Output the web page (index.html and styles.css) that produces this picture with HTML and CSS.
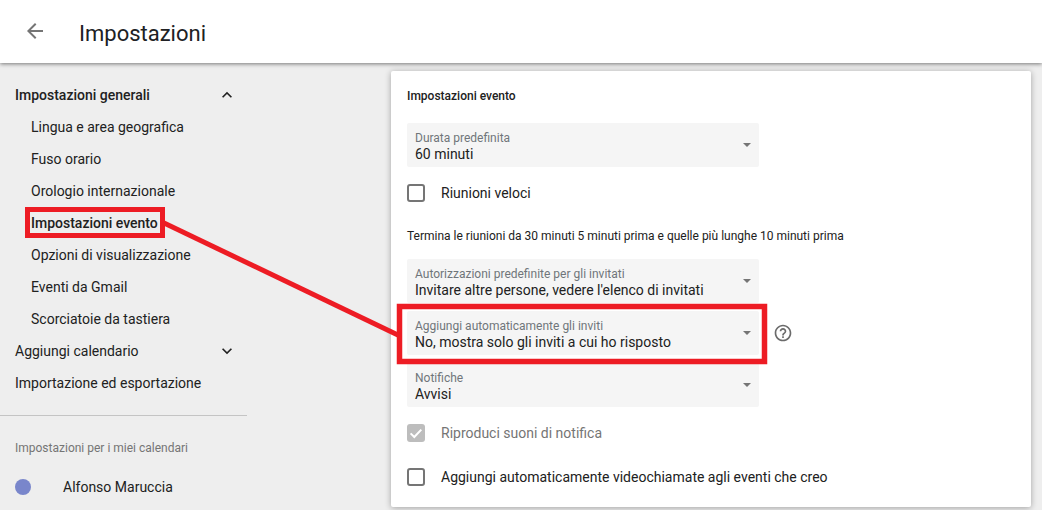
FILE: index.html
```html
<!DOCTYPE html>
<html lang="it">
<head>
<meta charset="utf-8">
<title>Impostazioni</title>
<link rel="stylesheet" href="styles.css">
</head>
<body>
<header class="topbar">
  <svg class="back" width="24" height="24" viewBox="0 0 24 24"><path d="M20 11H7.83l5.59-5.59L12 4l-8 8 8 8 1.41-1.41L7.83 13H20v-2z"/></svg>
  <h1 class="title">Impostazioni</h1>
</header>
<div class="main">
  <nav class="side">
    <div class="nav-row strong">Impostazioni generali
      <svg class="chev" width="20" height="20" viewBox="0 0 24 24"><path d="M12 8l-6 6 1.41 1.41L12 10.83l4.59 4.58L18 14z"/></svg>
    </div>
    <div class="nav-row sub">Lingua e area geografica</div>
    <div class="nav-row sub">Fuso orario</div>
    <div class="nav-row sub">Orologio internazionale</div>
    <div class="nav-row sub active">Impostazioni evento</div>
    <div class="nav-row sub">Opzioni di visualizzazione</div>
    <div class="nav-row sub">Eventi da Gmail</div>
    <div class="nav-row sub">Scorciatoie da tastiera</div>
    <div class="nav-row">Aggiungi calendario
      <svg class="chev" width="20" height="20" viewBox="0 0 24 24"><path d="M16.59 8.59L12 13.17 7.41 8.59 6 10l6 6 6-6z"/></svg>
    </div>
    <div class="nav-row">Importazione ed esportazione</div>
    <hr class="divider">
    <div class="side-label">Impostazioni per i miei calendari</div>
    <div class="cal"><span class="dot"></span>Alfonso Maruccia</div>
  </nav>
  <section class="card">
    <h2 class="card-title">Impostazioni evento</h2>
    <div class="select first"><span class="lab">Durata predefinita</span><span class="val">60 minuti</span><i class="caret"></i></div>
    <label class="check"><span class="box"></span>Riunioni veloci</label>
    <p class="note">Termina le riunioni da 30 minuti 5 minuti prima e quelle più lunghe 10 minuti prima</p>
    <div class="select"><span class="lab">Autorizzazioni predefinite per gli invitati</span><span class="val">Invitare altre persone, vedere l'elenco di invitati</span><i class="caret"></i></div>
    <div class="select-row">
      <div class="select"><span class="lab">Aggiungi automaticamente gli inviti</span><span class="val">No, mostra solo gli inviti a cui ho risposto</span><i class="caret"></i></div>
      <svg class="help" width="20" height="20" viewBox="0 0 24 24"><path d="M11 18h2v-2h-2v2zm1-16C6.48 2 2 6.48 2 12s4.480 10 10 10 10-4.480 10-10S17.520 2 12 2zm0 18c-4.410 0-8-3.590-8-8s3.590-8 8-8 8 3.590 8 8-3.590 8-8 8zm0-14c-2.210 0-4 1.790-4 4h2c0-1.100.9-2 2-2s2 .9 2 2c0 2-3 1.750-3 5h2c0-2.250 3-2.500 3-5 0-2.210-1.790-4-4-4z"/></svg>
    </div>
    <div class="select"><span class="lab">Notifiche</span><span class="val">Avvisi</span><i class="caret"></i></div>
    <label class="check disabled"><span class="box on"><svg width="18" height="18" viewBox="0 0 18 18"><path d="M3.600 9.400l3.700 3.600 7-7.400" fill="none" stroke="#fff" stroke-width="2"/></svg></span>Riproduci suoni di notifica</label>
    <label class="check last"><span class="box"></span>Aggiungi automaticamente videochiamate agli eventi che creo</label>
  </section>
</div>
<svg class="annot" width="1042" height="510" viewBox="0 0 1042 510">
  <g fill="none" stroke="#ed1c24">
    <rect x="27.500" y="209.500" width="135" height="26" stroke-width="5"/>
    <rect x="399.500" y="306.500" width="365" height="55" stroke-width="5.500"/>
    <path d="M163 222.500L400 336" stroke-width="5"/>
  </g>
</svg>
</body>
</html>
```
FILE: styles.css
```css
* { box-sizing: border-box; }
html, body { margin: 0; height: 510px; overflow: hidden; }
body {
  position: relative;
  background: #eeeeee;
  font-family: Roboto, "Liberation Sans", sans-serif;
  font-size: 14px;
  color: #212121;
}
.topbar {
  position: relative;
  z-index: 2;
  height: 63px;
  background: #fff;
  box-shadow: 0 1px 4px rgba(0, 0, 0, .5);
  display: flex;
  align-items: center;
  padding-left: 23px;
}
.back { fill: #757575; margin-top: -1px; }
.title {
  margin: 4px 0 0 32px;
  font-size: 22px;
  font-weight: 400;
  color: #202124;
  line-height: 28px;
}
.main { display: flex; height: 447px; }
.side { width: 391px; flex: none; padding-top: 16px; }
.nav-row {
  width: 247px;
  height: 32px;
  padding: 0 10px 0 15px;
  display: flex;
  align-items: center;
  justify-content: space-between;
  white-space: nowrap;
}
.nav-row.strong, .nav-row.active { font-weight: 500; }
.nav-row.sub { padding-left: 31px; }
.chev { fill: #212121; }
.divider {
  width: 247px;
  margin: 16px 0 0;
  border: 0;
  border-top: 1px solid #c4c4c4;
}
.side-label {
  margin: 24px 0 0 15px;
  font-size: 12px;
  line-height: 16px;
  color: #757575;
}
.cal {
  margin: 19px 0 0 15px;
  display: flex;
  align-items: center;
  height: 24px;
}
.dot {
  width: 16px;
  height: 16px;
  border-radius: 50%;
  background: #7986cb;
  margin-right: 32px;
}
.card {
  width: 640px;
  height: 436px;
  margin-top: 8px;
  background: #fff;
  border-radius: 2px;
  box-shadow: 0 1px 6px rgba(0, 0, 0, .32);
  padding: 17px 16px 16px;
}
.card-title {
  margin: 0;
  font-size: 12px;
  line-height: 16px;
  font-weight: 500;
  color: #212121;
}
.select {
  position: relative;
  width: 352px;
  height: 44px;
  background: #f5f5f5;
  border-radius: 2px;
  padding: 8px 8px 0;
  margin-bottom: 8px;
}
.select.first { margin-top: 19px; margin-bottom: 0; }
.lab {
  display: block;
  font-size: 12px;
  line-height: 14px;
  color: #70757a;
}
.val {
  display: block;
  font-size: 14px;
  line-height: 18px;
  color: #212121;
  white-space: nowrap;
}
.caret {
  position: absolute;
  right: 8px;
  top: 20px;
  width: 0;
  height: 0;
  border-left: 4px solid transparent;
  border-right: 4px solid transparent;
  border-top: 4px solid #757575;
}
.select-row { display: flex; align-items: flex-start; }
.help { fill: #6b6b6b; margin: 12px 0 0 14px; }
.check {
  display: flex;
  align-items: center;
  height: 18px;
  margin-top: 17px;
  white-space: nowrap;
}
.box {
  width: 18px;
  height: 18px;
  flex: none;
  margin-right: 16px;
  border: 2px solid #757575;
  border-radius: 3px;
}
.box.on {
  border: 0;
  background: #bdbdbd;
}
.box svg { display: block; }
.check.disabled { color: #757575; margin-top: 17px; }
.check.last { margin-top: 26px; }
.note {
  margin: 26px 0 15px;
  font-size: 12px;
  line-height: 16px;
  color: #212121;
}
.annot {
  position: absolute;
  left: 0;
  top: 0;
  z-index: 3;
  pointer-events: none;
}
```
